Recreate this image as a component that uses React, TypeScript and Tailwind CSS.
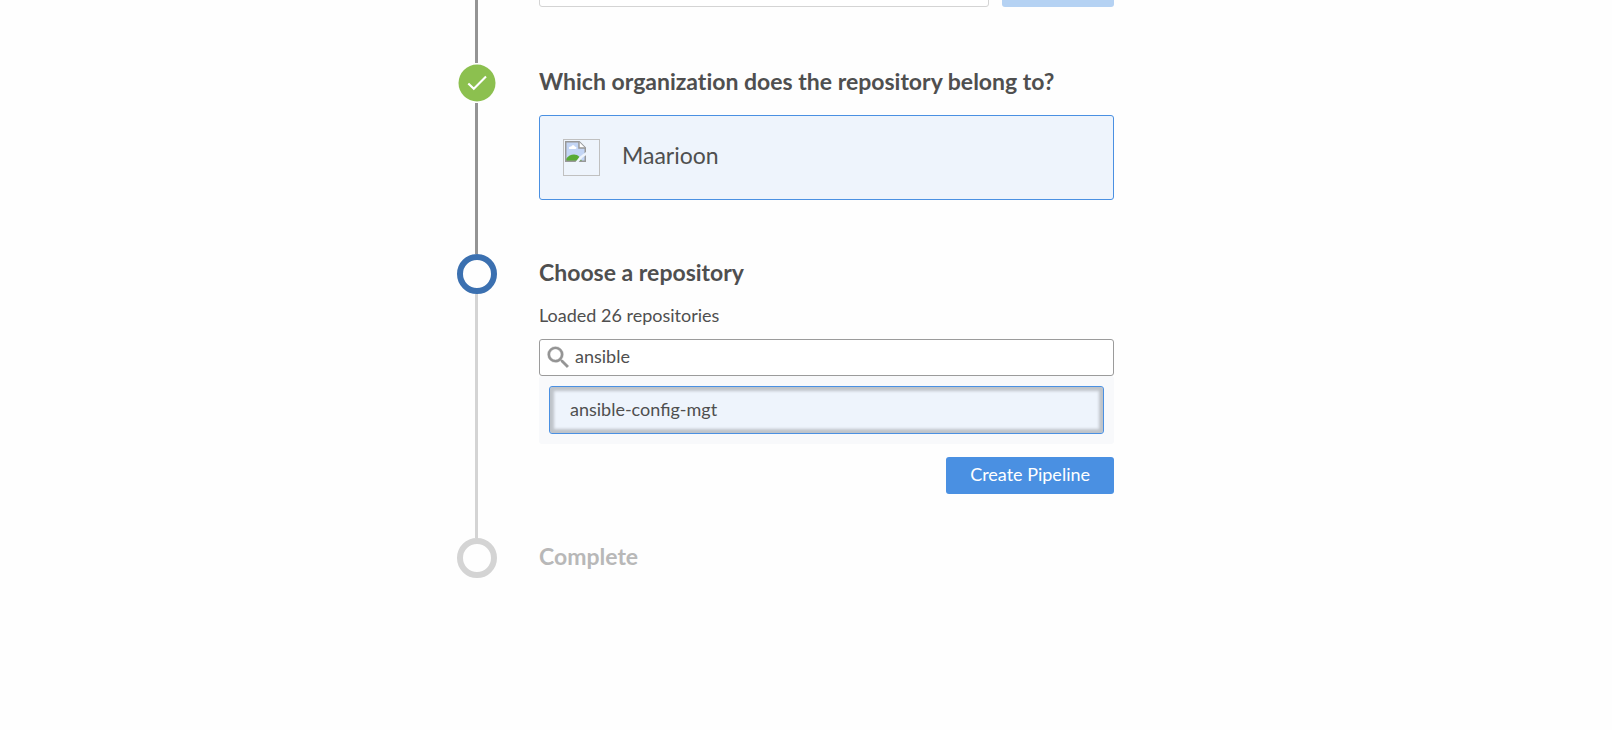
import { useState, type ReactNode } from "react";

type StepState = "done" | "active" | "pending";

function Marker({ state }: { state: StepState }) {
  if (state === "done") {
    return (
      <svg viewBox="0 0 40 40" className="size-10 shrink-0" aria-hidden="true">
        <circle cx="20" cy="20" r="18.5" fill="#8cc04f" />
        <path d="M11.3 20.4l5.5 5.4L29 13.6" fill="none" stroke="#fff" strokeWidth="2.1" />
      </svg>
    );
  }
  return (
    <div
      className={
        state === "active"
          ? "size-10 shrink-0 rounded-full border-6 border-[#3b70b0]"
          : "size-10 shrink-0 rounded-full border-6 border-[#d4d4d4]"
      }
    />
  );
}

function Step({
  state,
  title,
  last = false,
  children,
}: {
  state: StepState;
  title?: string;
  last?: boolean;
  children?: ReactNode;
}) {
  return (
    <li className="flex gap-[42px]">
      <div className="flex w-10 shrink-0 flex-col items-center">
        {title && <Marker state={state} />}
        {!last && (
          <div className={state === "done" ? "mr-px w-[3px] grow bg-[#949494]" : "mr-px w-[3px] grow bg-[#d4d4d4]"} />
        )}
      </div>
      <div className="min-w-0 grow">
        {title && (
          <h2
            className={
              state === "pending"
                ? "pt-1 text-[23px] leading-7 font-bold text-[#b8b8b8] [font-variant-ligatures:none]"
                : "pt-1 text-[23px] leading-7 font-bold text-[#4f4f4f] [font-variant-ligatures:none]"
            }
          >
            {title}
          </h2>
        )}
        {children}
      </div>
    </li>
  );
}

function BrokenImage() {
  return (
    <span className="size-[37px] shrink-0 border border-[#c0c0c0] p-px">
      <svg viewBox="0 0 20 20" className="size-[21px]" aria-hidden="true">
        <path d="M0.5 0.5h13.2l5.8 5.8v13.2h-19z" fill="#c3d5f5" />
        <path d="M4 7.500c-1-2 1.400-2.600 2-2.200.6-1.900 3.300-1.700 3.500.2 1.700-.3 2 2 .5 2z" fill="#fff" />
        <path d="M1 19.500v-2.500c3-4.500 9.500-5.500 12.500-2l3 4.500z" fill="#58aa35" />
        <path d="M.7 19.300V.7h12.800l5.800 5.800v12.800z" fill="none" stroke="#989898" strokeWidth="1.400" />
        <path d="M13.300.8v5.900h5.900" fill="#fff" stroke="#989898" strokeWidth="1.400" />
        <path d="M20 10.500v3l-3 2-4 4.500H10l3.500-4.500 3-2.500z" fill="#eef4fc" />
      </svg>
    </span>
  );
}

export default function App() {
  const [query, setQuery] = useState("ansible");
  const [token, setToken] = useState("");
  const repos = ["ansible-config-mgt"].filter((r) => r.includes(query.trim()));

  return (
    <main className="min-h-screen overflow-hidden bg-[#fefefe] font-['Lato',sans-serif] text-[#4f4f4f]">
      <ol className="mx-auto -mt-[30px] max-w-[698px] pr-[41px]">
        <Step state="done">
          <div className="flex gap-[13px] pb-14">
            <input
              aria-label="Access token"
              value={token}
              onChange={(e) => setToken(e.target.value)}
              className="h-[37px] min-w-0 grow rounded-[3px] border border-[#d4d4d4] bg-white px-3"
            />
            <button type="button" disabled aria-label="Connect" className="w-28 rounded-[3px] bg-[#b5d2f3]" />
          </div>
        </Step>

        <Step state="done" title="Which organization does the repository belong to?">
          <div className="pt-5 pb-[54px]">
            <button
              type="button"
              className="flex h-[85px] w-full gap-[22px] rounded-[3px] border border-[#4a90e2] bg-[#eef4fc] px-[23px] pt-[23px] text-left text-[23px] leading-8"
            >
              <BrokenImage />
              <span>Maarioon</span>
            </button>
          </div>
        </Step>

        <Step state="active" title="Choose a repository">
          <div className="pt-[17px] pb-11">
            <p className="text-[18px] leading-6">Loaded 26 repositories</p>
            <div className="mt-3 flex h-[37px] items-center gap-0.5 rounded-[3px] border border-[#9b9b9b] bg-white pl-1">
              <svg viewBox="0 0 24 24" className="size-[29px] shrink-0" fill="#949494" aria-hidden="true">
                <path d="M15.500 14h-.790l-.280-.270A6.471 6.471 0 0 0 16 9.500 6.500 6.500 0 1 0 9.500 16c1.610 0 3.090-.590 4.230-1.570l.270.280v.790l5 4.990L20.490 19l-4.990-5zm-6 0C7.010 14 5 11.990 5 9.500S7.010 5 9.500 5 14 7.010 14 9.500 11.990 14 9.500 14z" stroke="#949494" strokeWidth="0.3" />
              </svg>
              <input
                aria-label="Search repositories"
                value={query}
                onChange={(e) => setQuery(e.target.value)}
                className="min-w-0 grow bg-transparent pb-1 text-[18px] leading-6 outline-none"
              />
            </div>
            <ul className="rounded-[3px] bg-[#f8f9fb] p-2.5">
              {repos.map((repo) => (
                <li key={repo}>
                  <button
                    type="button"
                    className="block h-12 w-full rounded-[3px] border border-[#4a90e2] bg-[#eef4fc] px-5 pb-0.5 text-left text-[18px] leading-6 shadow-[inset_0_0_3px_4px_rgba(0,0,0,0.2)]"
                  >
                    {repo}
                  </button>
                </li>
              ))}
            </ul>
            <div className="mt-[13px] flex justify-end">
              <button
                type="button"
                className="h-[37px] rounded-[3px] bg-[#4a90e2] px-6 pb-1 text-[18px] leading-6 text-white"
              >
                Create Pipeline
              </button>
            </div>
          </div>
        </Step>

        <Step state="pending" title="Complete" last />
      </ol>
    </main>
  );
}
